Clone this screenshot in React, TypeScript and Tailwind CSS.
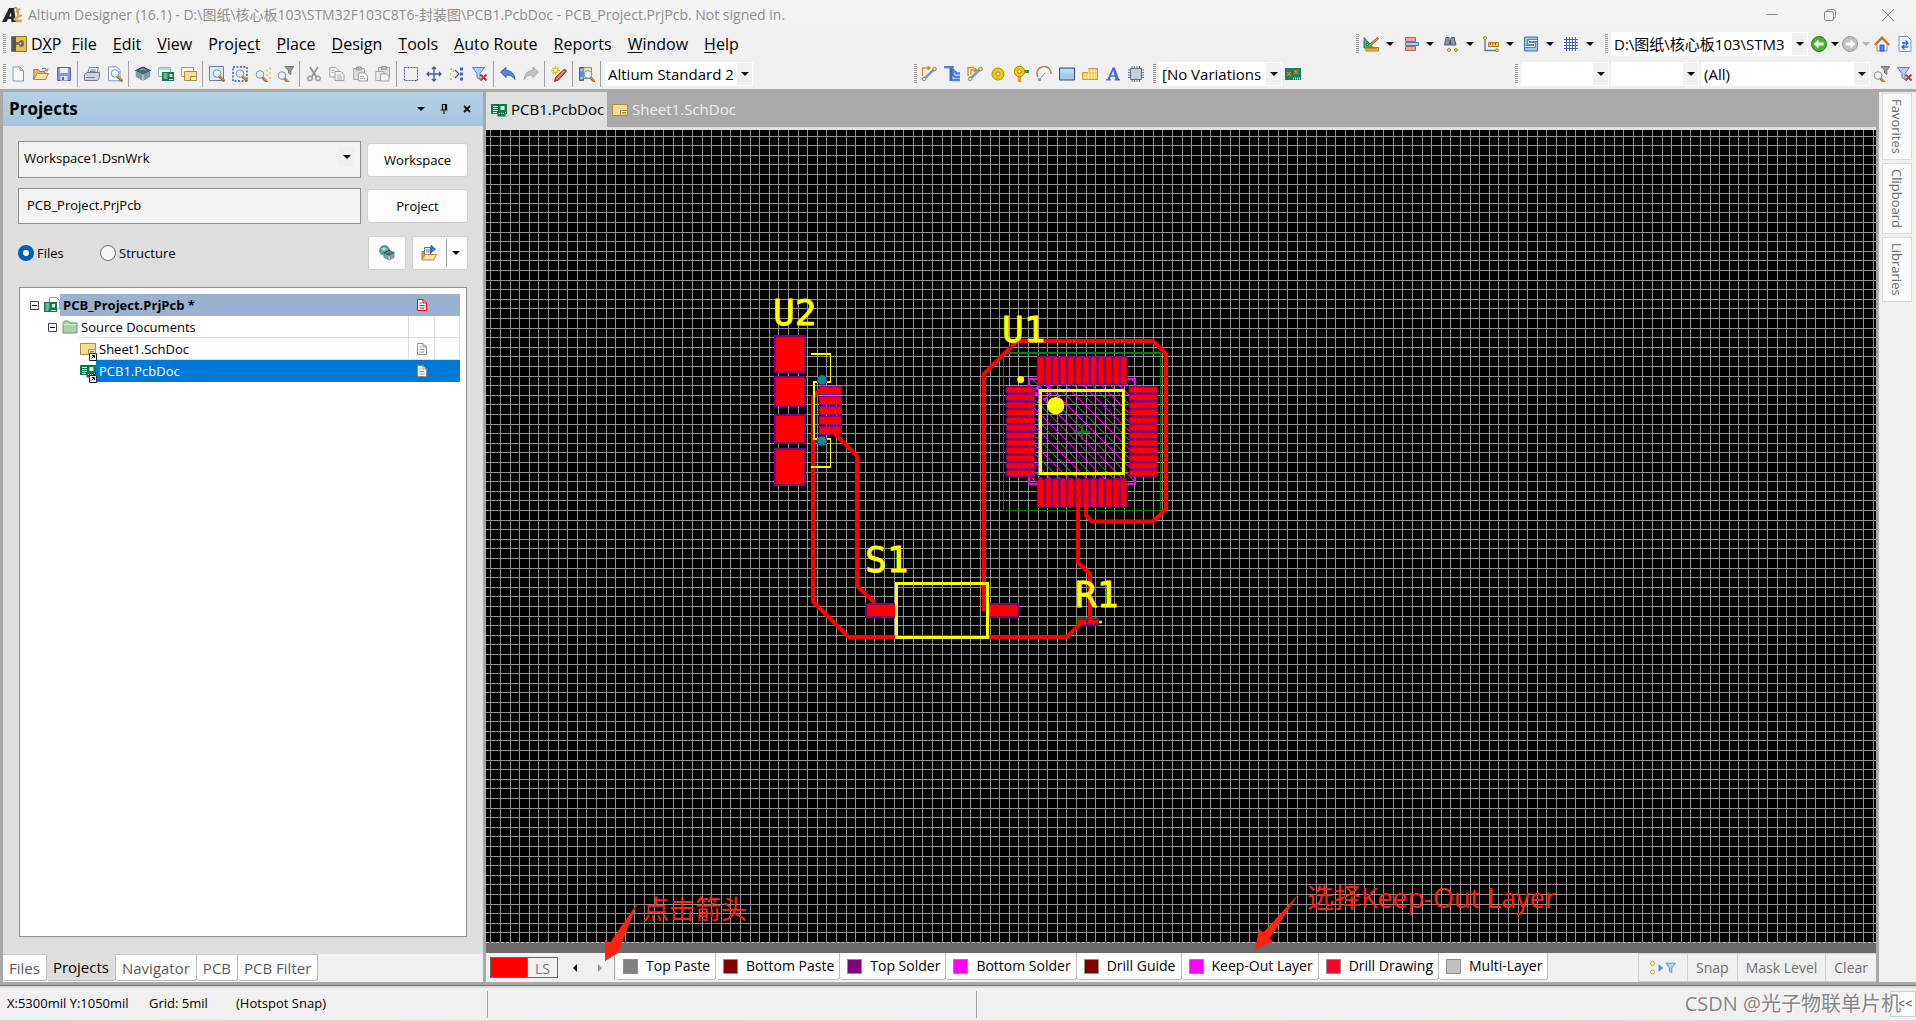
import { useId, useState } from "react"
import type { ReactNode } from "react"
import clsx from "clsx"

/* ---------- icons, all on a 16x16 box ---------- */

const lens = (
  <>
    <path d="M10.5 10.5 14.5 14.5" stroke="#a8691e" strokeWidth="2.6" strokeLinecap="round" />
    <path d="M10.8 10.4 14.4 14" stroke="#f0b24f" strokeWidth="1" />
    <circle cx="8" cy="7.5" r="3.8" fill="#e6f1fb" stroke="#7f93a8" />
  </>
)

const funnel = <path d="M.5 1.5h12L8 7.5v6l-3-2v-4z" fill="#b9cdf0" stroke="#5b7fc0" />

const redCross = <path d="m8.5 8.5 6 6m0-6-6 6" stroke="#c23b3b" strokeWidth="2" />

const board = (
  <>
    <path d="M0 2h16v10h-1.500v2.500H6.500V12H0z" fill="#0d7a4b" />
    <path d="M2 4.500h5M2 6.500h5M2 8.500h5M2 10.500h4" stroke="#d5f0df" />
    <path d="M9.500 4h4v4h-4z" fill="#dff3e7" />
    <path d="M8 11.500h1M10 11.500h1M12 11.500h1M14 10.500h1" stroke="#fff" />
  </>
)

const sheet = (
  <>
    <path d="M.5 2.500h15v11H.5z" fill="#f6dd90" stroke="#b08a3c" />
    <path d="M8.500 8.500h7v5h-7z" fill="#fdf3cd" stroke="#b08a3c" />
    <path d="M10 10.500h4M10 12h4" stroke="#b08a3c" />
  </>
)

const chip3d = (
  <>
    <path d="m8 1 7.500 3.500L8 8.500.5 4.500z" fill="#4d6670" stroke="#33464f" />
    <path d="M.5 5v5.500L8 15V8.500zM15.500 5v5.500L8 15V8.500z" fill="#a9c3cb" />
    <path d="M2 6v5.500M4 7v5.500M6 8v6M10 8v6M12 7v5.500M14 6v5.500" stroke="#4f7580" />
    <path d="m5 4.500 3-1.500 3 1.500" stroke="#92b3bd" fill="none" />
  </>
)

const icons: Record<string, ReactNode> = {
  newDoc: <path d="M3 1h7l3.500 3.500V15H3z M10 1v3.500h3.500" fill="#f8faff" stroke="#8096be" />,
  open: (
    <>
      <path d="M.8 13.500V3.500h4.500l1.500 2h5v8z" fill="#e2b872" stroke="#a97a35" />
      <path d="M.8 13.500 4 7.500h11.500l-3.200 6z" fill="#fbe0ac" stroke="#b78540" />
      <path d="M9 2.500q3.500-2 5 2m1-2-.8 2.600-2.500-.8" stroke="#6c87a8" fill="none" />
    </>
  ),
  save: (
    <>
      <path d="M1.500 1.500h13v13h-13z" fill="#8c96cc" stroke="#5a639f" />
      <path d="M4 2h8v5H4z" fill="#eef1fb" />
      <path d="M4.500 10h7v4.500h-7z" fill="#dfe3f2" />
      <path d="M6 11h2v3H6z" fill="#5a639f" />
    </>
  ),
  print: (
    <>
      <path d="M5.500 1.500h9l-2 6h-9z" fill="#fbfcff" stroke="#7c869b" />
      <path d="M.5 8.500 3 6.500h12.500v5l-2 3H.5z" fill="#ccd2de" stroke="#6e778b" />
      <path d="M2 11.500h9M6 4h6M5.500 5.500h6" stroke="#7c869b" />
    </>
  ),
  preview: (
    <>
      <path d="M1.500.8h8l3.500 3.500v10.500H1.500z" fill="#f8faff" stroke="#8096be" />
      {lens}
    </>
  ),
  chip: chip3d,
  pcbView: (
    <>
      <path d="M.5 1.500h12v9H.5z" fill="#e9f3f5" stroke="#9ab3bc" />
      <path d="M.5 3h12" stroke="#9ab3bc" />
      <path d="M4 6h12v9H4z" fill="#0d7a4b" />
      <path d="M5.500 8h4M5.500 10h4M5.500 12h4M11 13.500h4" stroke="#d5f0df" />
      <path d="M11.500 8h3v3h-3z" fill="#dff3e7" />
    </>
  ),
  schView: (
    <>
      <path d="M.5 1.500h12v9H.5z" fill="#f3f1e3" stroke="#a7a18a" />
      <path d="M3.500 5.500h12v9h-12z" fill="#f6dd90" stroke="#b08a3c" />
      <path d="M9.500 10.500h6v4h-6z" fill="#fdf3cd" stroke="#b08a3c" />
    </>
  ),
  zoomDoc: (
    <>
      <path d="M.5.5h14v14H.5z" fill="#dce8fa" stroke="#5f7eb8" />
      {lens}
    </>
  ),
  zoomArea: (
    <>
      <path d="M1 1h14v14H1z" fill="none" stroke="#3557a5" strokeWidth="1.500" strokeDasharray="2 1.500" />
      {lens}
    </>
  ),
  zoomPick: (
    <>
      <g transform="translate(-3 1)">{lens}</g>
      <path d="M11 4.500h2M14 2.500h2M11 9h2M14 12h2M14 7h2" stroke="#ddd07a" strokeWidth="2" />
    </>
  ),
  zoomFilter: (
    <>
      <g transform="translate(-4 2)">{lens}</g>
      <path d="M7 .5h9l-3.200 4v4L10.500 7V4.500z" fill="#9a9a9a" stroke="#777" />
    </>
  ),
  cut: (
    <>
      <path d="M4 1 10.500 11M12 1 5.500 11" stroke="#8d8d8d" strokeWidth="1.600" />
      <circle cx="4" cy="12.500" r="2.200" fill="none" stroke="#9d9d9d" strokeWidth="1.500" />
      <circle cx="12" cy="12.500" r="2.200" fill="none" stroke="#9d9d9d" strokeWidth="1.500" />
    </>
  ),
  copy: (
    <>
      <path d="M.8 1.500h6l2.500 2.500v7H.8z" fill="#f1f1f1" stroke="#a6a6a6" />
      <path d="M6 5.500h6l3 3v6H6z" fill="#f1f1f1" stroke="#a0a0a0" />
      <path d="M2.500 4.500h3M2.500 6.500h2M8 9h4M8 11h5M8 13h5" stroke="#b0b0b0" />
    </>
  ),
  paste: (
    <>
      <path d="M1.500 2.500h11v11h-11z" fill="#dcdcdc" stroke="#a6a6a6" />
      <path d="M4.500 1h5v3h-5z" fill="#bbb" stroke="#999" />
      <path d="M6.500 7h6l3 2.500v5.500h-9z" fill="#f4f4f4" stroke="#a0a0a0" />
      <path d="M8 10.500h4M8 12.500h5" stroke="#b0b0b0" />
    </>
  ),
  pasteArray: (
    <>
      <path d="M3.500 1.500h11v10h-11z" fill="#dcdcdc" stroke="#a6a6a6" />
      <path d="M6.500.5h5v3h-5z" fill="#bbb" stroke="#999" />
      <path d="M.8 5.500h8v9h-8z" fill="#e9e9e9" stroke="#a6a6a6" />
      <path d="M5.500 8h6l2.500 2v5h-8.500z" fill="#f4f4f4" stroke="#a0a0a0" />
    </>
  ),
  marquee: <path d="M1.500 1.500h13v13h-13z" fill="none" stroke="#3d55a0" strokeDasharray="2 1" />,
  move: (
    <path
      d="M8 1v14M1 8h14M6 3l2-2 2 2M6 13l2 2 2-2M3 6 1 8l2 2M13 6l2 2-2 2"
      fill="none"
      stroke="#46589c"
      strokeWidth="1.300"
    />
  ),
  deselect: (
    <>
      <path d="M1 3h2M1 8h1M1 13h2M4 5.500h1M4 10.500h1" stroke="#d9c756" strokeWidth="2" />
      <path d="m6 4 4 4-4 4" fill="none" stroke="#555" strokeWidth="1.200" />
      <path d="M11 3h3M11 8h3M11 13h3" stroke="#3d64b4" strokeWidth="3" />
    </>
  ),
  clearFilter: (
    <>
      {funnel}
      {redCross}
    </>
  ),
  undo: <path d="M.5 6 6 1.500v3q8 0 9 9-3-5-9-4.500v2.500z" fill="#5c87d0" stroke="#375da8" />,
  redo: <path d="M15.500 6 10 1.500v3q-8 0-9 9 3-5 9-4.500v2.500z" fill="#c4c4c4" stroke="#a5a5a5" />,
  pencilStar: (
    <>
      <path d="m13.500 3 2 2-8 9-4 1.500 1-4z" fill="#d8543f" stroke="#8f3528" />
      <path d="m13 5-7 8" stroke="#f6b5a8" />
      <path d="M4.500 0v9M0 4.500h9M1.500 1.500l6 6M7.500 1.500l-6 6" stroke="#f2c01e" strokeWidth="1.500" />
      <circle cx="4.500" cy="4.500" r="1.500" fill="#fdf0a0" />
    </>
  ),
  browse: (
    <>
      <path d="M.5 1.500h4v13h-4z" fill="#5d8ed1" stroke="#39619d" />
      <path d="M4.500 1.500h8v11h-8z" fill="#f3dd9e" stroke="#a48b47" />
      <path d="M1 4h3M1 12h3" stroke="#d9e7fa" />
      <g transform="translate(1 1)">{lens}</g>
    </>
  ),
  route: (
    <>
      <path d="M4 12 13 3.500" stroke="#8299b3" strokeWidth="2.500" />
      <path d="M1.500 10V2h7M6.500.5 9 2 6.500 4" fill="none" stroke="#c79326" strokeWidth="1.400" />
      <circle cx="3" cy="13" r="1.800" fill="#e9dfb4" stroke="#9a8a50" />
      <circle cx="13.500" cy="3" r="1.800" fill="#e9dfb4" stroke="#9a8a50" />
    </>
  ),
  bus: (
    <>
      <path d="M0 1h8.500v7.500L11 11h5M9 4l3.500 3.500H16M8 14h8" fill="none" stroke="#5580dd" strokeWidth="2.500" />
      <path d="M7 2v13" stroke="#3f66c4" strokeWidth="3" />
    </>
  ),
  routeDiff: (
    <>
      <path d="M4 12 13 3.500" stroke="#8299b3" strokeWidth="2.500" />
      <path d="M1 10V1.500h6M4 8.500V4h5M7 2l3 2-3 2" fill="none" stroke="#c79326" strokeWidth="1.300" />
      <circle cx="3" cy="13" r="1.800" fill="#e9dfb4" stroke="#9a8a50" />
      <circle cx="13.500" cy="3" r="1.800" fill="#e9dfb4" stroke="#9a8a50" />
    </>
  ),
  padRing: (
    <>
      <circle cx="8" cy="8" r="6" fill="#f3c800" stroke="#b08800" />
      <circle cx="8" cy="8" r="2" fill="#fff" stroke="#b08800" />
    </>
  ),
  via: (
    <>
      <path d="M10 5.500h6" stroke="#3f9a20" strokeWidth="3" />
      <path d="M6.500 10v6" stroke="#e09a35" strokeWidth="3.500" />
      <circle cx="6.500" cy="5.500" r="5.200" fill="#f3c800" stroke="#b08800" />
      <circle cx="6.500" cy="5.500" r="1.800" fill="#fff" stroke="#b08800" />
    </>
  ),
  arc: (
    <>
      <path d="M2 11A7 7 0 1 1 15 8" fill="none" stroke="#b18763" strokeWidth="1.600" />
      <path d="M4 13 10 6" stroke="#5874b3" strokeDasharray="2 1" />
      <path d="M2 12h3v3H2z" fill="#8fa3cf" />
    </>
  ),
  fill: (
    <>
      <path d="M.5 2h15v12H.5z" fill="#a5cbea" stroke="#2f4d7c" />
      <path d="M1.500 3h13v4h-13z" fill="#bcdcf3" />
    </>
  ),
  polygon: (
    <>
      <path d="M.5 6.500h6v-4h9v11H.5z" fill="#f0c850" stroke="#c7a03a" />
      <path d="M1 9h14M1 11.500h14M7 5h8M3.500 7v6M6.500 3v10M9.500 3v10M12.500 3v10" stroke="#fff6d4" strokeWidth=".6" />
    </>
  ),
  letter: (
    <path d="M1 14.500h5v-1.200l-1-.3.8-2.200h4l.8 2.200-1.100.3v1.200H15v-1.200l-1-.3L9.800 1.500H7.600L2.500 13l-1.500.3zM6.300 9.300 8 4.800l1.500 4.500z" fill="#4a6fc4" />
  ),
  ic: (
    <>
      <path d="M4 0v16M6.500 0v16M9 0v16M11.500 0v16M0 4h16M0 6.500h16M0 9h16M0 11.500h16" stroke="#5f7383" />
      <path d="M2.500 2.500h11v11h-11z" fill="#c4ced6" stroke="#5f7383" />
    </>
  ),
  variant: (
    <>
      <path d="M0 2h16v12H0z" fill="#0d8460" />
      <path d="m2 6 4 4m0-4-4 4M9 4l4 4m0-4-4 4" stroke="#f0781c" strokeWidth="1.600" />
      <path d="M8 12.500h7" stroke="#fff" strokeWidth="2" strokeDasharray="1 1" />
    </>
  ),
  drafting: (
    <>
      <path d="M1 1.500 10.500 12H1z M3.500 6.500v3.200h3z" fill="#3cb87d" stroke="#19875a" fillRule="evenodd" />
      <path d="m5 9.500 9.500-8 1 1.500-9 7.500z" fill="#f0ad3c" stroke="#8c5418" />
      <path d="M3 11.500h12.500v3.500H3z" fill="#fbc955" stroke="#b27a1c" />
      <path d="M5 12v1.500M7 12v1.500M9 12v1.500M11 12v1.500M13 12v1.500" stroke="#8c5418" />
    </>
  ),
  align: (
    <>
      <path d="M2.500 1.500h10v4h-10zM2.500 10.500h10v4h-10z" fill="#f3a4a0" stroke="#c65d58" />
      <path d="M2.500 6.500h13v3h-13z" fill="#a7cdee" stroke="#487cb0" />
    </>
  ),
  find: (
    <>
      <path d="M3 1.500h3v2l1 5.500H1.500l1-5.500zM8.500 1.500h3v2l1.500 5.500H7.500v-5.500z" fill="#8a96a6" stroke="#4f5b6b" />
      <circle cx="6" cy="14" r="1.500" fill="#f5dc86" stroke="#a98a33" />
      <circle cx="13" cy="14" r="1.500" fill="#f5dc86" stroke="#a98a33" />
    </>
  ),
  dimension: (
    <>
      <path d="M2 2v12.500h12" fill="none" stroke="#60799d" strokeWidth="1.400" />
      <path d="M5.500 6.500h10v4h-10z" fill="#fbc955" stroke="#b27a1c" />
      <path d="M7.500 7v2M10 7v2M12.500 7v2" stroke="#8c5418" />
      <circle cx="2" cy="2" r="1.500" fill="#f5dc86" stroke="#a98a33" />
      <circle cx="14" cy="14.300" r="1.500" fill="#f5dc86" stroke="#a98a33" />
    </>
  ),
  room: (
    <>
      <path d="M1.500 1h13v14h-13z" fill="#9bc7ea" stroke="#3c73a8" />
      <path d="M14 4.500H5.500v3h6v3H2" fill="none" stroke="#3c73a8" strokeWidth="2.600" />
      <path d="M14 4.500H5.500v3h6v3H2" fill="none" stroke="#fff" />
    </>
  ),
  grid: <path d="M3.500 1v14M6.500 1v14M9.500 1v14M12.500 1v14M1 3.500h14M1 6.500h14M1 9.500h14M1 12.500h14" stroke="#48699f" />,
  back: (
    <>
      <circle cx="8" cy="8" r="7.500" fill="#4bb32c" stroke="#277d12" />
      <path d="m2.800 8 4.700-4.500v3h5v3h-5v3z" fill="#fff" />
    </>
  ),
  forward: (
    <>
      <circle cx="8" cy="8" r="7.500" fill="#c3c3c3" stroke="#999" />
      <path d="M13.200 8 8.500 3.500v3h-5v3h5v3z" fill="#fff" />
    </>
  ),
  home: (
    <>
      <path d="M3 8v7h10V8L8 3z" fill="#fbf6ef" stroke="#8f8a94" />
      <path d="M.8 9 8 1.500 15.200 9" fill="none" stroke="#da6c1e" strokeWidth="2.200" />
      <path d="M6 9h4v6H6z" fill="#4f88d8" stroke="#2d5fa8" />
    </>
  ),
  refresh: (
    <>
      <path d="M2 .5h8.500L14 4v11.500H2z" fill="#f5f9ff" stroke="#7896bf" />
      <path d="M5 7h5.500M8.500 4.500 11 7 8.500 9.500M11 11H5.500M7.500 8.500 5 11l2.500 2.500" fill="none" stroke="#2d66cf" strokeWidth="1.300" />
    </>
  ),
  board,
  sheet,
  project: (
    <>
      <path d="M5.500.5h7l3 3V12h-10z" fill="#fff" stroke="#9c9cc0" />
      <path d="M0 5h13v10H0z" fill="#0d7a4b" />
      <path d="M1.500 7h4M1.500 9h4M1.500 11h4M1.500 13h3M7 13.500h5" stroke="#d5f0df" />
      <path d="M8 7h3v3.500H8z" fill="#dff3e7" />
    </>
  ),
  folder: (
    <>
      <path d="M1 4.500 2.500 2h4L8 4h7v10H1z" fill="#a9d3a4" stroke="#5f9a60" />
      <path d="M1.500 5.500h13" stroke="#d7efd2" />
    </>
  ),
  compile: (
    <>
      <circle cx="5.500" cy="5.500" r="4.800" fill="#5bb06c" stroke="#2f77b6" />
      <path d="M2 4q3-3 6 0-2 3-6 0z" fill="#a9d8f5" />
      <g transform="translate(4 4.500) scale(.75)">{chip3d}</g>
    </>
  ),
  openProject: (
    <>
      <path d="M3.500 2.500h6v8h-6z" fill="#fff" stroke="#5674b2" />
      <path d="M5 5h4M5 7h4" stroke="#5674b2" />
      <path d="M10 .5 14.500 4 10 7.500z" fill="#3e7fe0" stroke="#2a5bb0" />
      <path d="M1 14.500v-8h2v4h8v4z" fill="#e2b872" stroke="#a97a35" />
      <path d="M1 15 4 9.500h11.500L12.500 15z" fill="#fbe0ac" stroke="#b78540" />
    </>
  ),
  dxp: (
    <>
      <path d="M.5.5h15v15H.5z" fill="#e9c54a" stroke="#8c7326" />
      <path d="M1 1h4v14H1z" fill="#55555c" />
      <path d="M5 6h3q0-2 2.500-2T13 7.500 10.500 11 8 9H5z" fill="#6b6b70" />
      <circle cx="9.500" cy="7.500" r="1" fill="#f4e2a0" />
    </>
  ),
  maskFilter: (
    <>
      <circle cx="3.500" cy="3.500" r="2" fill="#fbf6b8" stroke="#b3a840" />
      <circle cx="3.500" cy="12" r="2" fill="#fbf6b8" stroke="#b3a840" />
      <path d="M9.500 4v8l4.500-4z" fill="#3f93e6" />
    </>
  ),
}

function Icon({ name, className }: { name: string; className?: string }) {
  return (
    <svg viewBox="0 0 16 16" fill="none" aria-hidden="true" className={clsx("size-4 shrink-0", className)}>
      {icons[name]}
    </svg>
  )
}

function Caret({ muted }: { muted?: boolean }) {
  return (
    <svg viewBox="0 0 8 4" aria-hidden="true" className="h-1 w-2 shrink-0">
      <path d="M0 0h8L4 4z" fill={muted ? "#b4b4b4" : "#000"} />
    </svg>
  )
}

/* ---------- toolbar pieces ---------- */

function Grip() {
  return (
    <div className="h-5 w-[3px] shrink-0 bg-[repeating-linear-gradient(to_bottom,#9a9a9a_0_1px,transparent_1px_2px)]" />
  )
}

function ToolButton({ name, className }: { name: string; className?: string }) {
  return (
    <button type="button" aria-label={name} className={clsx("flex h-6 w-[23px] shrink-0 items-center justify-center", className)}>
      <Icon name={name} />
    </button>
  )
}

function DropTool({ name, muted, className }: { name: string; muted?: boolean; className?: string }) {
  return (
    <button type="button" aria-label={name} className={clsx("flex shrink-0 items-center", className)}>
      <Icon name={name} />
      <Caret muted={muted} />
    </button>
  )
}

function Combo({ label, value, className }: { label: string; value: string; className?: string }) {
  return (
    <div className={clsx("relative h-6 shrink-0 bg-white", className)}>
      <select aria-label={label} className="h-full w-full appearance-none overflow-hidden bg-white pl-[3px] text-[15px] leading-6 text-black outline-none">
        <option>{value}</option>
      </select>
      <span className="pointer-events-none absolute inset-y-px right-px flex w-[15px] items-center justify-center bg-[#f0f0f0]">
        <Caret />
      </span>
    </div>
  )
}

const menus: [string, string, string][] = [
  ["", "F", "ile"],
  ["", "E", "dit"],
  ["", "V", "iew"],
  ["Proje", "c", "t"],
  ["", "P", "lace"],
  ["", "D", "esign"],
  ["", "T", "ools"],
  ["", "A", "uto Route"],
  ["", "R", "eports"],
  ["", "W", "indow"],
  ["", "H", "elp"],
]

const toolGroups = [
  ["newDoc", "open", "save"],
  ["print", "preview"],
  ["chip", "pcbView", "schView"],
  ["zoomDoc", "zoomArea", "zoomPick", "zoomFilter"],
  ["cut", "copy", "paste", "pasteArray"],
  ["marquee", "move", "deselect", "clearFilter"],
  ["undo", "redo"],
  ["pencilStar"],
  ["browse"],
]

const placeTools = ["route", "bus", "routeDiff", "padRing", "via", "arc", "fill", "polygon", "letter", "ic"]
const utilityTools = ["drafting", "align", "find", "dimension", "room", "grid"]

function TitleBar() {
  return (
    <header className="flex h-[29px] shrink-0 items-center bg-[#f3f3f3] pl-[2px] text-[#8e8e8e]">
      <svg viewBox="0 0 20 18" aria-hidden="true" className="h-[18px] w-5">
        <path d="M0 16 7 2h5l2 14H9.500l-.3-3H6l-1.500 3z M7.300 10.500h2L9 6z" fill="#26262a" fillRule="evenodd" />
        <path d="M12 2q3-1 3 1.500t3-1M14 6q3-1 2 1.500t2 2-3 2 2 3-3 1" fill="none" stroke="#c7a955" strokeWidth="2" />
      </svg>
      <h1 className="ml-[6px] truncate text-sm">
        Altium Designer (16.1) - D:\图纸\核心板103\STM32F103C8T6-封装图\PCB1.PcbDoc - PCB_Project.PrjPcb. Not signed in.
      </h1>
      <div className="ml-auto flex h-full items-center gap-[46px] pr-[22px]">
        <button type="button" aria-label="Minimize">
          <svg viewBox="0 0 12 12" className="size-3">
            <path d="M0 5.500h12" stroke="#8a8a8a" />
          </svg>
        </button>
        <button type="button" aria-label="Restore">
          <svg viewBox="0 0 12 12" className="size-3" fill="none" stroke="#8a8a8a">
            <rect x=".5" y="2.500" width="9" height="9" rx="1.500" />
            <path d="M3 2.500V2A1.500 1.500 0 0 1 4.500.5H9A2.500 2.500 0 0 1 11.500 3v4.500A1.500 1.500 0 0 1 10 9h-.5" />
          </svg>
        </button>
        <button type="button" aria-label="Close">
          <svg viewBox="0 0 12 12" className="size-3">
            <path d="m0 0 12 12M12 0 0 12" stroke="#8a8a8a" />
          </svg>
        </button>
      </div>
    </header>
  )
}

function MenuBar() {
  return (
    <div className="flex h-[30px] shrink-0 items-center bg-[#f0f0f0] pl-[3px]">
      <Grip />
      <Icon name="dxp" className="ml-[5px]" />
      <button type="button" className="mr-[10px] ml-[4px] text-base leading-6">
        D<span className="underline underline-offset-2">X</span>P
      </button>
      <nav className="flex gap-4 text-base leading-6 whitespace-nowrap">
        {menus.map(([before, key, after]) => (
          <button type="button" key={before + key + after}>
            {before}
            <span className="underline underline-offset-2">{key}</span>
            {after}
          </button>
        ))}
      </nav>
      <div className="ml-auto flex items-center">
        <Grip />
        <div className="ml-[4px] flex">
          {utilityTools.map((name) => (
            <DropTool key={name} name={name} className="w-10 gap-[7px]" />
          ))}
        </div>
        <div className="ml-[2px]">
          <Grip />
        </div>
        <Combo label="Location" value="D:\图纸\核心板103\STM3" className="mx-[3px] w-[197px]" />
        <DropTool name="back" className="w-[31px] gap-[4px]" />
        <DropTool name="forward" muted className="w-[31px] gap-[4px]" />
        <ToolButton name="home" className="-ml-[3px]" />
        <ToolButton name="refresh" />
      </div>
    </div>
  )
}

function ToolBar() {
  return (
    <div className="flex h-[30px] shrink-0 items-center bg-[#f0f0f0] pl-[3px]">
      <Grip />
      <div className="flex items-center">
        {toolGroups.map((group, i) => (
          <div key={i} className="flex items-center">
            {group.map((name) => (
              <ToolButton key={name} name={name} />
            ))}
            <span className="mx-[2px] h-[26px] w-px bg-[#a0a0a0]" />
          </div>
        ))}
      </div>
      <Combo label="View configuration" value="Altium Standard 2" className="ml-[2px] w-[148px]" />
      <div className="ml-auto flex items-center">
        <Grip />
        {placeTools.map((name) => (
          <ToolButton key={name} name={name} />
        ))}
        <div className="ml-[6px]">
          <Grip />
        </div>
        <Combo label="Variations" value="[No Variations" className="mx-[3px] w-[123px]" />
        <Icon name="variant" />
      </div>
      <div className="ml-[214px] flex items-center">
        <Grip />
        <Combo label="Filter" value="" className="ml-[3px] w-[88px]" />
        <Combo label="Component" value="" className="ml-[2px] w-[88px]" />
        <Combo label="Net" value="(All)" className="ml-[2px] w-[169px]" />
        <ToolButton name="zoomFilter" />
        <ToolButton name="clearFilter" />
      </div>
    </div>
  )
}

/* ---------- projects panel ---------- */

function Expander() {
  return (
    <svg viewBox="0 0 9 9" aria-hidden="true" className="size-[9px] shrink-0">
      <path d="M.5.5h8v8h-8z" fill="#fff" stroke="#444" />
      <path d="M2 4.500h5" stroke="#000" />
    </svg>
  )
}

function DocMark({ color }: { color: string }) {
  return (
    <svg viewBox="0 0 10 12" aria-hidden="true" fill="none" stroke={color} className="h-3 w-[10px]">
      <path d="M.5.5h5.500l3.500 3.500v7.500h-9z" fill="#fff" />
      <path d="M6 .5V4h3.500M2.500 4h2M2.500 6.500h5M2.500 9h5" />
    </svg>
  )
}

type Row = { label: string; icon: string; indent: string; expand?: boolean; shortcut?: boolean; mark?: string; tone?: "project" | "selected" }

const rows: Row[] = [
  { label: "PCB_Project.PrjPcb *", icon: "project", indent: "pl-[10px]", expand: true, mark: "#f00000", tone: "project" },
  { label: "Source Documents", icon: "folder", indent: "pl-[28px]", expand: true },
  { label: "Sheet1.SchDoc", icon: "sheet", indent: "pl-[60px]", shortcut: true, mark: "#8a8a8a" },
  { label: "PCB1.PcbDoc", icon: "board", indent: "pl-[60px]", shortcut: true, mark: "#8a8a8a", tone: "selected" },
]

function TreeRow({ row }: { row: Row }) {
  const split = row.tone ? "border-transparent" : "border-[#dedede]"
  return (
    <li className={clsx("flex h-[22px] items-center", row.indent)}>
      {row.expand && (
        <span className="mr-[5px]">
          <Expander />
        </span>
      )}
      <span className="relative">
        <Icon name={row.icon} />
        {row.shortcut && (
          <svg viewBox="0 0 8 8" aria-hidden="true" className="absolute -right-px -bottom-1 size-2">
            <path d="M.5.5h7v7h-7z" fill="#fff" stroke="#222" />
            <path d="M2.500 5.500 5 3M3 2.500h2.500V5" fill="none" stroke="#000" />
          </svg>
        )}
      </span>
      <div
        className={clsx(
          "flex h-full flex-1 items-center border-b pl-[3px]",
          row.tone === "project" && "border-[#99b2d1] bg-[#99b2d1] font-bold",
          row.tone === "selected" && "border-[#0078d7] bg-[#0078d7] text-white",
          !row.tone && "border-[#dedede]",
        )}
      >
        <span className="flex-1">{row.label}</span>
        <span className={clsx("flex h-full w-[26px] items-center justify-center border-l", split)}>
          {row.mark && <DocMark color={row.mark} />}
        </span>
        <span className={clsx("h-full w-[26px] border-x", split)} />
      </div>
    </li>
  )
}

const panelButton = "flex h-[34px] items-center justify-center rounded-[3px] border border-[#d0d0d0] bg-[#fdfdfd]"
const radio =
  "size-4 appearance-none rounded-full border border-[#707070] bg-[#f6f6f6] checked:border-[5px] checked:border-[#005fb8] checked:bg-white"

function ProjectsPanel() {
  const id = useId()
  const [view, setView] = useState("files")
  return (
    <aside className="flex w-[480px] shrink-0 flex-col bg-[#f0f0f0]">
      <div className="flex h-[34px] shrink-0 items-center bg-linear-to-b from-[#b5d1e5] to-[#a5c5dc] pr-[12px] pl-[6px]">
        <h2 className="text-[17px] leading-6 font-bold">Projects</h2>
        <div className="ml-auto flex items-center gap-[15px]">
          <button type="button" aria-label="Panel menu">
            <Caret />
          </button>
          <button type="button" aria-label="Pin panel">
            <svg viewBox="0 0 8 10" className="h-[10px] w-2">
              <path d="M2 .5h4.500V5.500M2.500 0v6M5.500 0v6M.5 6h7M4 6v4" fill="none" stroke="#111" strokeWidth="1.200" />
            </svg>
          </button>
          <button type="button" aria-label="Close panel">
            <svg viewBox="0 0 8 8" className="size-2">
              <path d="m1 1 6 6M7 1 1 7" stroke="#111" strokeWidth="1.800" />
            </svg>
          </button>
        </div>
      </div>

      <div className="flex min-h-0 flex-1 flex-col bg-[#dedede] px-[15px] pt-[15px] pb-[17px] text-[13px] leading-5">
        <div className="grid grid-cols-[1fr_101px] items-center gap-x-[6px] gap-y-[10px]">
          <div className="relative">
            <select aria-label="Workspace file" className="h-[37px] w-full appearance-none border border-[#8f8f8f] bg-[#f4f4f4] pb-[4px] pl-[5px] text-[13px]">
              <option>Workspace1.DsnWrk</option>
            </select>
            <span className="pointer-events-none absolute top-[6px] right-[6px] flex h-5 w-[17px] items-center justify-center bg-[#f0f0f0]">
              <Caret />
            </span>
          </div>
          <button type="button" className={panelButton}>
            Workspace
          </button>
          <input aria-label="Project file" defaultValue="PCB_Project.PrjPcb" className="h-9 w-full border border-[#8f8f8f] bg-[#f4f4f4] pb-[2px] pl-2" />
          <button type="button" className={panelButton}>
            Project
          </button>
        </div>

        <div className="mt-3 flex items-center">
          <input type="radio" id={id + "f"} name={id} checked={view === "files"} onChange={() => setView("files")} className={radio} />
          <label htmlFor={id + "f"} className="ml-[3px] w-[63px]">
            Files
          </label>
          <input type="radio" id={id + "s"} name={id} checked={view === "structure"} onChange={() => setView("structure")} className={radio} />
          <label htmlFor={id + "s"} className="ml-[3px]">
            Structure
          </label>
          <button type="button" aria-label="Compile" className={clsx(panelButton, "ml-auto w-[38px]")}>
            <Icon name="compile" />
          </button>
          <button type="button" aria-label="Open project" className={clsx(panelButton, "ml-[6px] w-[56px] gap-[9px]")}>
            <Icon name="openProject" />
            <span className="-mr-[4px] h-7 w-px bg-[#999]" />
            <Caret />
          </button>
        </div>

        <ul className="mx-px mt-[17px] flex-1 border border-[#8f8f8f] bg-white pt-[6px] pr-[6px]">
          {rows.map((row) => (
            <TreeRow key={row.label} row={row} />
          ))}
        </ul>
      </div>

      <div className="flex h-7 shrink-0 text-[15px] leading-6 text-[#5a5a5a]">
        {["Files", "Projects", "Navigator", "PCB", "PCB Filter"].map((tab) => (
          <button
            type="button"
            key={tab}
            className={clsx(
              "h-[27px] rounded-b-[3px] border-r border-b border-[#bdbdbd] px-[6px]",
              tab === "Projects" ? "bg-[#dedede] text-black" : "border-t border-t-[#c8c8c8] bg-white",
            )}
          >
            {tab}
          </button>
        ))}
      </div>
    </aside>
  )
}

/* ---------- board editor ---------- */

const STEP = 9.6
const range = (n: number) => Array.from({ length: n }, (_, i) => i)
const gridX = range(420).map((i) => Math.floor(490.9 + i * STEP))
const gridY = range(260).map((i) => Math.floor(136.1 + i * STEP))
const pins = range(12).map((i) => i * 7.57)

function Pin({ x, y, vertical }: { x: number; y: number; vertical?: boolean }) {
  const w = vertical ? 7.6 : 30
  const h = vertical ? 30 : 7.6
  return (
    <>
      <rect x={x - w / 2} y={y - h / 2} width={w} height={h} rx="2.5" fill="#800080" />
      <rect x={x - w / 2 + 1.3} y={y - h / 2 + 1.3} width={w - 2.6} height={h - 2.6} rx="2.5" fill="#f00" />
    </>
  )
}

function Board() {
  return (
    <svg className="block h-full w-full bg-black" role="img" aria-label="PCB layout">
      <g transform="translate(-486 -130)">
        <g fill="#949194" shapeRendering="crispEdges">
          {gridX.map((x) => (
            <rect key={x} x={x} y="130" width="1" height="2400" />
          ))}
          {gridY.map((y) => (
            <rect key={y} x="486" y={y} width="4000" height="1" />
          ))}
        </g>

        {/* courtyard and body hatch of U1 */}
        <clipPath id="hatch">
          <rect x="1029" y="379" width="106" height="105" />
        </clipPath>
        <g stroke="#008000" fill="none" shapeRendering="crispEdges">
          <rect x="1003.5" y="352.5" width="157" height="158" />
          <path d="M1003 353h158" strokeWidth="2" />
        </g>
        <g stroke="#f0f" fill="none" shapeRendering="crispEdges">
          <g clipPath="url(#hatch)">
            {range(24).map((i) => (
              <path key={i} d={`M${924 + i * 9} 379l106 106`} />
            ))}
          </g>
          <rect x="1029" y="379" width="106" height="105" strokeWidth="2" />
          <circle cx="1043" cy="392" r="7" strokeWidth="2" strokeDasharray="4 2" />
        </g>
        <path d="M1074 432h16M1082 424v16" stroke="#008000" strokeWidth="2" shapeRendering="crispEdges" />

        {/* pads of U1 */}
        {pins.map((d) => (
          <g key={d}>
            <Pin x={1040.5 + d} y={370.5} vertical />
            <Pin x={1040.5 + d} y={493} vertical />
            <Pin x={1020.5} y={390 + d} />
            <Pin x={1143.5} y={390 + d} />
          </g>
        ))}

        {/* pads of U2, S1 and R1 */}
        <g fill="#f00" stroke="#800080" strokeWidth="2" shapeRendering="crispEdges">
          <rect x="775" y="336" width="30" height="36" />
          <rect x="775" y="377" width="30" height="29" />
          <rect x="775" y="415" width="30" height="28" />
          <rect x="775" y="449" width="30" height="36" />
          <rect x="866" y="604" width="30" height="13" />
          <rect x="988" y="604" width="30" height="13" />
        </g>
        <g fill="#f00" stroke="#800080" shapeRendering="crispEdges">
          {[386.5, 396.5, 406.5, 416.5, 426.5].map((y) => (
            <rect key={y} x="819.5" y={y} width="22" height="8" />
          ))}
        </g>
        <rect x="1077" y="618" width="21" height="8" fill="#800080" />
        <path d="M1077 627v-9h21v7" fill="none" stroke="#008000" />
        <path d="M1078 622h8M1088 622h9" stroke="#f00" strokeWidth="4" />

        <g fill="none" stroke="#f00" strokeWidth="4" strokeLinejoin="round">
          <path d="m820 390-7 7v204.500l35.500 35.500H1067l14-14" />
          <path d="m834 433 23 23v130l18 17" />
          <path d="M984 611V374l33-33h136l13 13v155l-13 12.500h-61l-6-6V490" />
          <path d="M1078 490v72.500l12 11.500v48" />
        </g>

        <g fill="none" stroke="#ff0" shapeRendering="crispEdges">
          <path d="M811 354h20M814 382h17M814 381v59M814 439h17M811 467h20" strokeWidth="2" />
          <path d="M830.5 353v29M830.5 439v29" />
          <rect x="896.5" y="583.5" width="91" height="54" strokeWidth="3" />
          <rect x="1040.5" y="390.5" width="83" height="83" strokeWidth="3" />
        </g>
        <circle cx="1055.700" cy="405.700" r="8.700" fill="#ff0" />
        <circle cx="1020.700" cy="379.500" r="3.500" fill="#ff0" />
        <circle cx="1100.500" cy="622" r="1.600" fill="#ff0" />
        <circle cx="822" cy="380" r="5" fill="#009090" stroke="#800080" />
        <circle cx="822" cy="441" r="5" fill="#009090" stroke="#800080" />

        <g fill="#ff0" stroke="#ff0" strokeWidth=".8" fontSize="36" className="font-['DejaVu_Sans_Mono',monospace]">
          <text x="773" y="325">U2</text>
          <text x="1002" y="342">U1</text>
          <text x="865" y="572">S1</text>
          <text x="1075" y="607">R1</text>
        </g>
      </g>
    </svg>
  )
}

const layers: [string, string][] = [
  ["Top Paste", "bg-[#808080]"],
  ["Bottom Paste", "bg-[#800000]"],
  ["Top Solder", "bg-[#800080]"],
  ["Bottom Solder", "bg-[#ff00ff]"],
  ["Drill Guide", "bg-[#800000]"],
  ["Keep-Out Layer", "bg-[#ff00ff]"],
  ["Drill Drawing", "bg-[#ff002a]"],
  ["Multi-Layer", "bg-[#c0c0c0]"],
]

function LayerBar() {
  return (
    <div className="flex h-[29px] shrink-0 bg-[#f0f0f0] text-sm leading-6 whitespace-nowrap">
      <button type="button" className="mt-1 ml-1 flex h-[21px] w-[68px] border border-[#666]">
        <span className="h-full w-[37px] border-r border-[#666] bg-[#f00]" />
        <span className="flex-1 text-center leading-[22px] text-[#777]">LS</span>
      </button>
      <div className="flex w-14 items-center justify-between pr-3 pl-[15px]">
        <button type="button" aria-label="Previous layers">
          <svg viewBox="0 0 4 8" className="h-2 w-1">
            <path d="M4 0v8L0 4z" />
          </svg>
        </button>
        <button type="button" aria-label="Next layers">
          <svg viewBox="0 0 4 8" className="h-2 w-1">
            <path d="M0 0v8l4-4z" fill="#999" />
          </svg>
        </button>
      </div>
      <div className="flex h-[27px] border-l border-[#aaa] pl-px">
        {layers.map(([name, color]) => (
          <button type="button" key={name} className="flex items-center rounded-b-[3px] border-r border-b border-[#bdbdbd] bg-white pr-[5px] pl-[7px]">
            <span className={clsx("mr-2 size-[15px] border border-[#8f8f8f]", color)} />
            {name}
          </button>
        ))}
      </div>
      <div className="ml-auto flex text-[#6f6f6f]">
        <button type="button" aria-label="Mask filter" className="flex w-[49px] items-center justify-center border border-r-0 border-[#d0d0d0]">
          <Icon name="maskFilter" />
          <svg viewBox="0 0 14 15" className="size-3" aria-hidden="true">
            {funnel}
          </svg>
        </button>
        {["Snap", "Mask Level", "Clear"].map((name) => (
          <button type="button" key={name} className="border border-r-0 border-[#d0d0d0] px-2">
            {name}
          </button>
        ))}
      </div>
    </div>
  )
}

function Editor() {
  return (
    <main className="flex min-w-0 flex-1 flex-col">
      <div className="flex h-[35px] shrink-0 text-[15px]">
        <button type="button" className="flex w-[121px] items-center gap-1 bg-[#dfdfdf] pl-[5px]">
          <Icon name="board" />
          PCB1.PcbDoc
        </button>
        <button type="button" className="flex items-center gap-1 pl-[5px] text-[#f0f0f0]">
          <Icon name="sheet" />
          Sheet1.SchDoc
        </button>
      </div>
      <div className="h-[3px] shrink-0 bg-[#dfdfdf]" />
      <div className="relative min-h-0 flex-1">
        <Board />
        {/* hand-drawn notes over the board */}
        <p className="absolute bottom-[15px] left-[157px] text-[26px] leading-9 text-[#ff2412]">点击箭头</p>
        <p className="absolute right-[320px] bottom-[26px] text-[27px] leading-9 whitespace-nowrap text-[#ff2412]">选择Keep-Out Layer</p>
        <svg viewBox="0 0 34 58" aria-hidden="true" className="absolute -bottom-[19px] left-[118px] h-[58px] w-[34px]">
          <path d="M33.500 0 14 50l-13 8V37l4 4z" fill="#ff2412" />
          <path d="M1 37v21l14-12z" fill="#ff2412" />
        </svg>
        <svg viewBox="0 0 44 56" aria-hidden="true" className="absolute right-[577px] -bottom-[8px] h-[56px] w-[44px]">
          <path d="M43.500 0 13 47l-6-7z" fill="#ff2412" />
          <path d="M4 35 0 56l18-9z" fill="#ff2412" />
        </svg>
      </div>
      <div className="h-[11px] shrink-0 border-t border-dashed border-[#c0c0c0] bg-[#6e6a6a]" />
      <LayerBar />
    </main>
  )
}

function SideTabs() {
  return (
    <nav className="flex w-[37px] shrink-0 flex-col items-start gap-[3px] bg-[#f0f0f0] pt-px pl-[3px] text-[13px] text-[#6a6a6a]">
      {["Favorites", "Clipboard", "Libraries"].map((name) => (
        <button type="button" key={name} className="w-[30px] border border-[#dadada] bg-[#fbfbfb] px-[5px] leading-[28px] [writing-mode:vertical-rl]">
          {name}
        </button>
      ))}
    </nav>
  )
}

function StatusBar() {
  return (
    <footer className="shrink-0">
      <div className="h-[3px] bg-[#a9a9a9]" />
      <div className="h-px bg-[#6f6f6f]" />
      <div className="relative flex h-[34px] items-center border-t-2 border-[#dcdcdc] bg-[#f0f0f0] text-[13px]">
        <div className="flex h-[27px] w-[488px] items-center border-r border-[#a0a0a0] pl-[7px]">
          <span className="w-[142px]">X:5300mil Y:1050mil</span>
          <span className="w-[87px]">Grid: 5mil</span>
          <span>(Hotspot Snap)</span>
        </div>
        <div className="h-[27px] w-[489px] border-r border-[#a0a0a0]" />
        <button type="button" className="ml-auto h-[26px] w-[26px] border border-[#d0d0d0] bg-[#fbfbfb] pl-1 text-[#444]">
          &lt;&lt;
        </button>
        <p className="absolute right-[15px] text-[20px] leading-7 text-[#858585] [text-shadow:1px_1px_0_#fff]">CSDN @光子物联单片机</p>
      </div>
      <div className="h-[2px] bg-linear-to-r from-[#cfdcc8] via-[#e6e3a8] to-[#cfdbe0]" />
    </footer>
  )
}

export default function App() {
  return (
    <div className="flex h-screen flex-col overflow-hidden bg-[#a9a9a9] font-['Open_Sans','Noto_Sans_CJK_SC',sans-serif] text-black">
      <TitleBar />
      <MenuBar />
      <ToolBar />
      <div className="flex min-h-0 flex-1 gap-[3px] pt-[3px] pl-[3px]">
        <ProjectsPanel />
        <Editor />
        <SideTabs />
      </div>
      <StatusBar />
    </div>
  )
}
